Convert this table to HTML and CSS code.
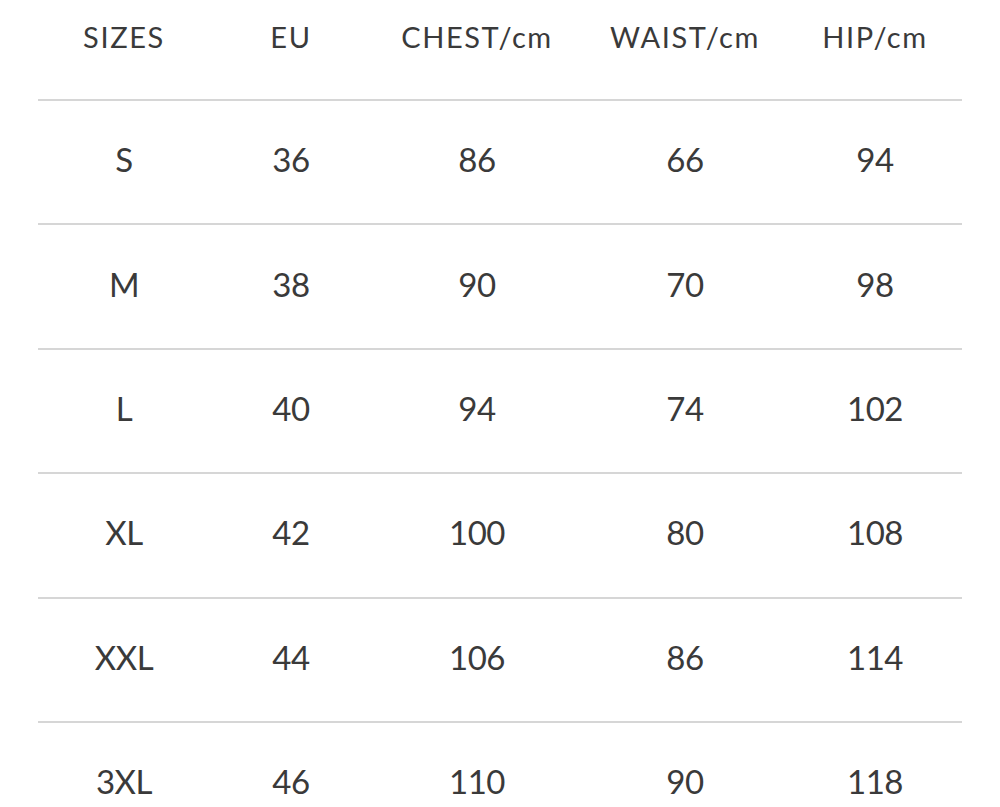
FILE: index.html
```html
<!DOCTYPE html>
<html lang="en">
<head>
<meta charset="utf-8">
<title>Size chart</title>
<link rel="stylesheet" href="styles.css">
</head>
<body>
<main class="chart">
  <div class="row head">
    <div class="cell">SIZES</div>
    <div class="cell">EU</div>
    <div class="cell">CHEST/cm</div>
    <div class="cell">WAIST/cm</div>
    <div class="cell">HIP/cm</div>
  </div>
  <div class="row body">
    <div class="cell">S</div><div class="cell">36</div><div class="cell">86</div><div class="cell">66</div><div class="cell">94</div>
  </div>
  <div class="row body">
    <div class="cell">M</div><div class="cell">38</div><div class="cell">90</div><div class="cell">70</div><div class="cell">98</div>
  </div>
  <div class="row body">
    <div class="cell">L</div><div class="cell">40</div><div class="cell">94</div><div class="cell">74</div><div class="cell">102</div>
  </div>
  <div class="row body">
    <div class="cell">XL</div><div class="cell">42</div><div class="cell">100</div><div class="cell">80</div><div class="cell">108</div>
  </div>
  <div class="row body">
    <div class="cell">XXL</div><div class="cell">44</div><div class="cell">106</div><div class="cell">86</div><div class="cell">114</div>
  </div>
  <div class="row body">
    <div class="cell">3XL</div><div class="cell">46</div><div class="cell">110</div><div class="cell">90</div><div class="cell">118</div>
  </div>
</main>
</body>
</html>
```

FILE: styles.css
```css
html, body {
  margin: 0;
  padding: 0;
  background: #ffffff;
}

body {
  width: 1000px;
  height: 807px;
  overflow: hidden;
  font-family: "Lato", "Liberation Sans", sans-serif;
  color: #3a3a3a;
}

.chart {
  width: 924px;
  margin-left: 38px;
}

.row {
  box-sizing: border-box;
  display: grid;
  grid-template-columns: 172px 162px 210px 206px 174px;
  align-items: center;
  justify-items: center;
}

.head {
  height: 72px;
  font-size: 29px;
  letter-spacing: 1.6px;
  margin-bottom: 27px;
}

.body {
  height: 124.4px;
  border-top: 2.5px solid #d6d6d6;
  font-size: 33px;
  letter-spacing: -0.5px;
  padding-bottom: 6px;
}
```
